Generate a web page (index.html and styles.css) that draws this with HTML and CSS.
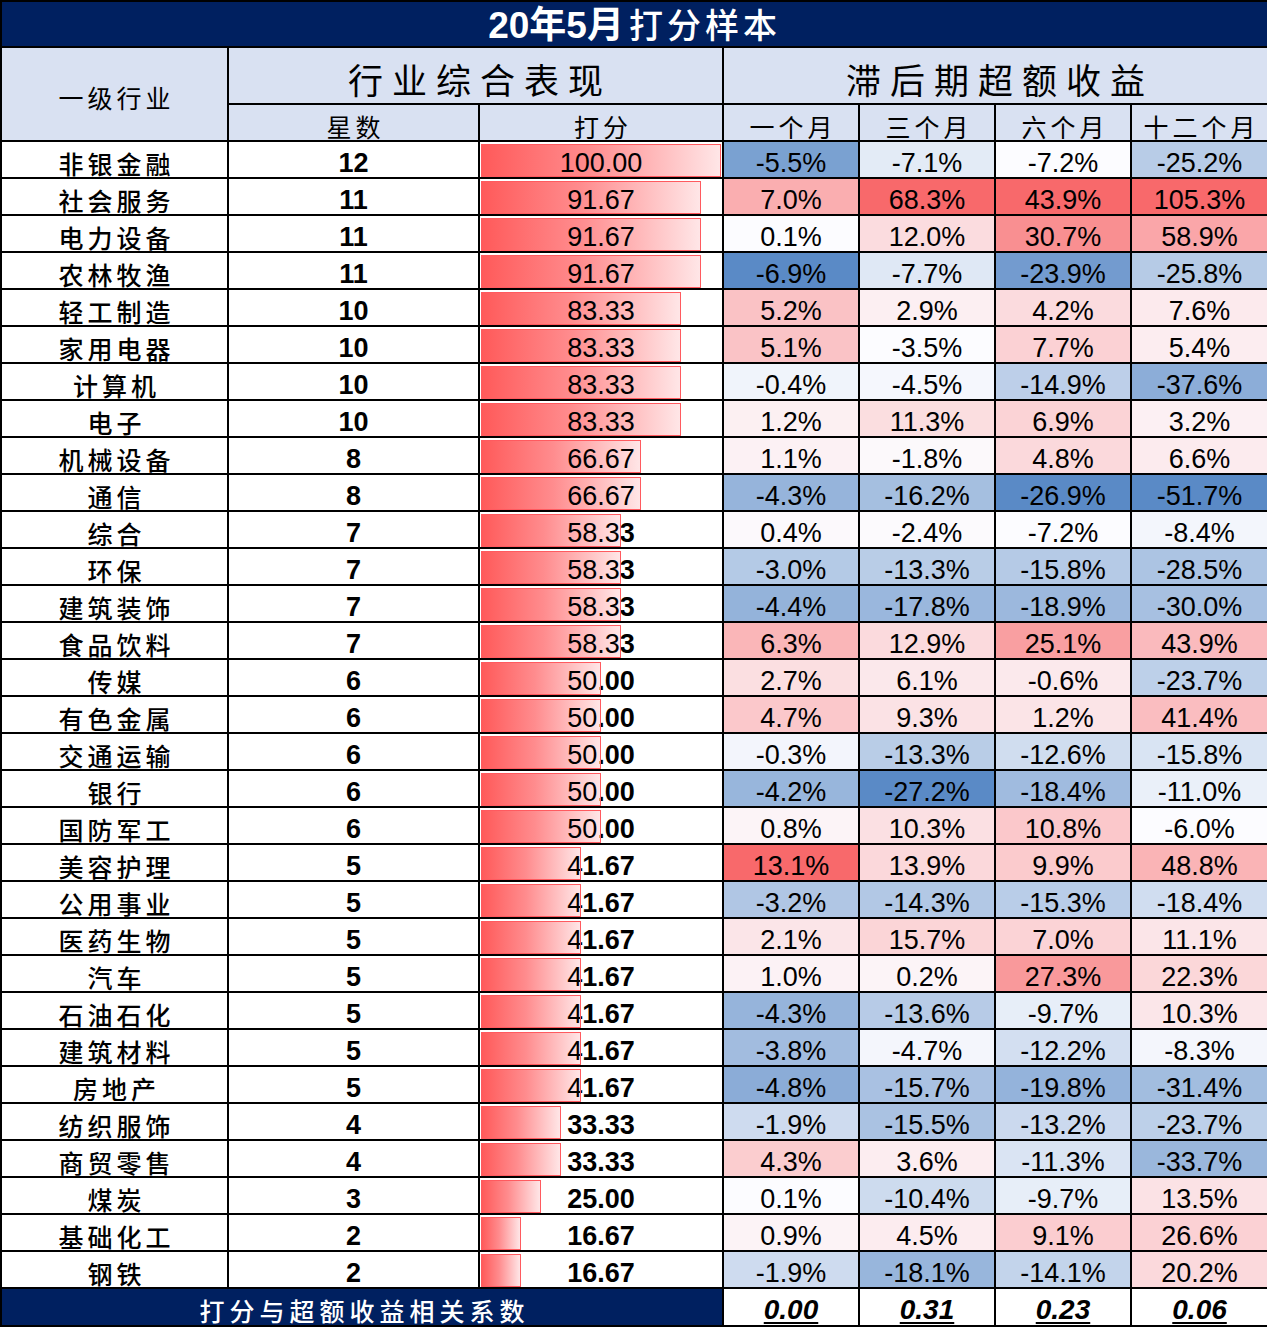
FILE: index.html
```html
<!DOCTYPE html>
<html lang="zh-CN">
<head>
<meta charset="utf-8">
<title>20年5月打分样本</title>
<link rel="stylesheet" href="styles.css">
</head>
<body>
<table class="sheet">
<colgroup><col class="c-ind"><col class="c-star"><col class="c-score"><col class="c-ret"><col class="c-ret"><col class="c-ret"><col class="c-ret-last"></colgroup>
<thead>
<tr class="r-title"><th colspan="7"><span class="t-num">20年5月</span><span class="t-cn">打分样本</span></th></tr>
<tr class="r-h1"><th rowspan="2" class="h-ind">一级行业</th><th colspan="2" class="h-big">行业综合表现</th><th colspan="4" class="h-big">滞后期超额收益</th></tr>
<tr class="r-h2"><th>星数</th><th>打分</th><th>一个月</th><th>三个月</th><th>六个月</th><th>十二个月</th></tr>
</thead>
<tbody>
<tr><td class="ind">非银金融</td><td class="star">12</td><td class="score"><div class="sc"><div class="bar" style="width:240px" data-s="100.00"></div>100.00</div></td><td class="ret">-5.5%</td><td class="ret">-7.1%</td><td class="ret">-7.2%</td><td class="ret">-25.2%</td></tr>
<tr><td class="ind">社会服务</td><td class="star">11</td><td class="score"><div class="sc"><div class="bar" style="width:220px" data-s="91.67"></div>91.67</div></td><td class="ret">7.0%</td><td class="ret">68.3%</td><td class="ret">43.9%</td><td class="ret">105.3%</td></tr>
<tr><td class="ind">电力设备</td><td class="star">11</td><td class="score"><div class="sc"><div class="bar" style="width:220px" data-s="91.67"></div>91.67</div></td><td class="ret">0.1%</td><td class="ret">12.0%</td><td class="ret">30.7%</td><td class="ret">58.9%</td></tr>
<tr><td class="ind">农林牧渔</td><td class="star">11</td><td class="score"><div class="sc"><div class="bar" style="width:220px" data-s="91.67"></div>91.67</div></td><td class="ret">-6.9%</td><td class="ret">-7.7%</td><td class="ret">-23.9%</td><td class="ret">-25.8%</td></tr>
<tr><td class="ind">轻工制造</td><td class="star">10</td><td class="score"><div class="sc"><div class="bar" style="width:200px" data-s="83.33"></div>83.33</div></td><td class="ret">5.2%</td><td class="ret">2.9%</td><td class="ret">4.2%</td><td class="ret">7.6%</td></tr>
<tr><td class="ind">家用电器</td><td class="star">10</td><td class="score"><div class="sc"><div class="bar" style="width:200px" data-s="83.33"></div>83.33</div></td><td class="ret">5.1%</td><td class="ret">-3.5%</td><td class="ret">7.7%</td><td class="ret">5.4%</td></tr>
<tr><td class="ind">计算机</td><td class="star">10</td><td class="score"><div class="sc"><div class="bar" style="width:200px" data-s="83.33"></div>83.33</div></td><td class="ret">-0.4%</td><td class="ret">-4.5%</td><td class="ret">-14.9%</td><td class="ret">-37.6%</td></tr>
<tr><td class="ind">电子</td><td class="star">10</td><td class="score"><div class="sc"><div class="bar" style="width:200px" data-s="83.33"></div>83.33</div></td><td class="ret">1.2%</td><td class="ret">11.3%</td><td class="ret">6.9%</td><td class="ret">3.2%</td></tr>
<tr><td class="ind">机械设备</td><td class="star">8</td><td class="score"><div class="sc"><div class="bar" style="width:160px" data-s="66.67"></div>66.67</div></td><td class="ret">1.1%</td><td class="ret">-1.8%</td><td class="ret">4.8%</td><td class="ret">6.6%</td></tr>
<tr><td class="ind">通信</td><td class="star">8</td><td class="score"><div class="sc"><div class="bar" style="width:160px" data-s="66.67"></div>66.67</div></td><td class="ret">-4.3%</td><td class="ret">-16.2%</td><td class="ret">-26.9%</td><td class="ret">-51.7%</td></tr>
<tr><td class="ind">综合</td><td class="star">7</td><td class="score"><div class="sc"><div class="bar" style="width:140px" data-s="58.33"></div>58.33</div></td><td class="ret">0.4%</td><td class="ret">-2.4%</td><td class="ret">-7.2%</td><td class="ret">-8.4%</td></tr>
<tr><td class="ind">环保</td><td class="star">7</td><td class="score"><div class="sc"><div class="bar" style="width:140px" data-s="58.33"></div>58.33</div></td><td class="ret">-3.0%</td><td class="ret">-13.3%</td><td class="ret">-15.8%</td><td class="ret">-28.5%</td></tr>
<tr><td class="ind">建筑装饰</td><td class="star">7</td><td class="score"><div class="sc"><div class="bar" style="width:140px" data-s="58.33"></div>58.33</div></td><td class="ret">-4.4%</td><td class="ret">-17.8%</td><td class="ret">-18.9%</td><td class="ret">-30.0%</td></tr>
<tr><td class="ind">食品饮料</td><td class="star">7</td><td class="score"><div class="sc"><div class="bar" style="width:140px" data-s="58.33"></div>58.33</div></td><td class="ret">6.3%</td><td class="ret">12.9%</td><td class="ret">25.1%</td><td class="ret">43.9%</td></tr>
<tr><td class="ind">传媒</td><td class="star">6</td><td class="score"><div class="sc"><div class="bar" style="width:120px" data-s="50.00"></div>50.00</div></td><td class="ret">2.7%</td><td class="ret">6.1%</td><td class="ret">-0.6%</td><td class="ret">-23.7%</td></tr>
<tr><td class="ind">有色金属</td><td class="star">6</td><td class="score"><div class="sc"><div class="bar" style="width:120px" data-s="50.00"></div>50.00</div></td><td class="ret">4.7%</td><td class="ret">9.3%</td><td class="ret">1.2%</td><td class="ret">41.4%</td></tr>
<tr><td class="ind">交通运输</td><td class="star">6</td><td class="score"><div class="sc"><div class="bar" style="width:120px" data-s="50.00"></div>50.00</div></td><td class="ret">-0.3%</td><td class="ret">-13.3%</td><td class="ret">-12.6%</td><td class="ret">-15.8%</td></tr>
<tr><td class="ind">银行</td><td class="star">6</td><td class="score"><div class="sc"><div class="bar" style="width:120px" data-s="50.00"></div>50.00</div></td><td class="ret">-4.2%</td><td class="ret">-27.2%</td><td class="ret">-18.4%</td><td class="ret">-11.0%</td></tr>
<tr><td class="ind">国防军工</td><td class="star">6</td><td class="score"><div class="sc"><div class="bar" style="width:120px" data-s="50.00"></div>50.00</div></td><td class="ret">0.8%</td><td class="ret">10.3%</td><td class="ret">10.8%</td><td class="ret">-6.0%</td></tr>
<tr><td class="ind">美容护理</td><td class="star">5</td><td class="score"><div class="sc"><div class="bar" style="width:100px" data-s="41.67"></div>41.67</div></td><td class="ret">13.1%</td><td class="ret">13.9%</td><td class="ret">9.9%</td><td class="ret">48.8%</td></tr>
<tr><td class="ind">公用事业</td><td class="star">5</td><td class="score"><div class="sc"><div class="bar" style="width:100px" data-s="41.67"></div>41.67</div></td><td class="ret">-3.2%</td><td class="ret">-14.3%</td><td class="ret">-15.3%</td><td class="ret">-18.4%</td></tr>
<tr><td class="ind">医药生物</td><td class="star">5</td><td class="score"><div class="sc"><div class="bar" style="width:100px" data-s="41.67"></div>41.67</div></td><td class="ret">2.1%</td><td class="ret">15.7%</td><td class="ret">7.0%</td><td class="ret">11.1%</td></tr>
<tr><td class="ind">汽车</td><td class="star">5</td><td class="score"><div class="sc"><div class="bar" style="width:100px" data-s="41.67"></div>41.67</div></td><td class="ret">1.0%</td><td class="ret">0.2%</td><td class="ret">27.3%</td><td class="ret">22.3%</td></tr>
<tr><td class="ind">石油石化</td><td class="star">5</td><td class="score"><div class="sc"><div class="bar" style="width:100px" data-s="41.67"></div>41.67</div></td><td class="ret">-4.3%</td><td class="ret">-13.6%</td><td class="ret">-9.7%</td><td class="ret">10.3%</td></tr>
<tr><td class="ind">建筑材料</td><td class="star">5</td><td class="score"><div class="sc"><div class="bar" style="width:100px" data-s="41.67"></div>41.67</div></td><td class="ret">-3.8%</td><td class="ret">-4.7%</td><td class="ret">-12.2%</td><td class="ret">-8.3%</td></tr>
<tr><td class="ind">房地产</td><td class="star">5</td><td class="score"><div class="sc"><div class="bar" style="width:100px" data-s="41.67"></div>41.67</div></td><td class="ret">-4.8%</td><td class="ret">-15.7%</td><td class="ret">-19.8%</td><td class="ret">-31.4%</td></tr>
<tr><td class="ind">纺织服饰</td><td class="star">4</td><td class="score"><div class="sc"><div class="bar" style="width:80px" data-s="33.33"></div>33.33</div></td><td class="ret">-1.9%</td><td class="ret">-15.5%</td><td class="ret">-13.2%</td><td class="ret">-23.7%</td></tr>
<tr><td class="ind">商贸零售</td><td class="star">4</td><td class="score"><div class="sc"><div class="bar" style="width:80px" data-s="33.33"></div>33.33</div></td><td class="ret">4.3%</td><td class="ret">3.6%</td><td class="ret">-11.3%</td><td class="ret">-33.7%</td></tr>
<tr><td class="ind">煤炭</td><td class="star">3</td><td class="score"><div class="sc"><div class="bar" style="width:60px" data-s="25.00"></div>25.00</div></td><td class="ret">0.1%</td><td class="ret">-10.4%</td><td class="ret">-9.7%</td><td class="ret">13.5%</td></tr>
<tr><td class="ind">基础化工</td><td class="star">2</td><td class="score"><div class="sc"><div class="bar" style="width:40px" data-s="16.67"></div>16.67</div></td><td class="ret">0.9%</td><td class="ret">4.5%</td><td class="ret">9.1%</td><td class="ret">26.6%</td></tr>
<tr><td class="ind">钢铁</td><td class="star">2</td><td class="score"><div class="sc"><div class="bar" style="width:40px" data-s="16.67"></div>16.67</div></td><td class="ret">-1.9%</td><td class="ret">-18.1%</td><td class="ret">-14.1%</td><td class="ret">20.2%</td></tr>
</tbody>
<tfoot>
<tr class="r-foot"><td colspan="3" class="f-label">打分与超额收益相关系数</td><td class="f-val">0.00</td><td class="f-val">0.31</td><td class="f-val">0.23</td><td class="f-val">0.06</td></tr>
</tfoot>
</table>
<script src="script.js"></script>
</body>
</html>
```

FILE: styles.css
```css
html, body {
  margin: 0;
  padding: 0;
  background: #ffffff;
}

body {
  font-family: "Liberation Sans", "Noto Sans CJK SC", sans-serif;
  color: #000;
}

.sheet {
  border-collapse: collapse;
  table-layout: fixed;
  width: 1267px;
}

.c-ind { width: 227px; }
.c-star { width: 251px; }
.c-score { width: 244px; }
.c-ret { width: 136px; }
.c-ret-last { width: 137px; }

.sheet th,
.sheet td {
  border: 2px solid #000;
  padding: 6px 0 0;
  text-align: center;
  vertical-align: middle;
  white-space: nowrap;
  line-height: 28px;
}

/* title */
.r-title { height: 45px; }
.r-title th {
  background: #002060;
  color: #fff;
  padding: 2px 0 0;
  line-height: 40px;
  font-size: 37px;
}
.t-num {
  font-family: "Liberation Sans", "Noto Sans CJK SC", sans-serif;
  font-weight: 700;
}
.t-cn {
  font-family: "Noto Sans CJK SC", sans-serif;
  font-weight: 500;
  font-size: 34px;
  letter-spacing: 4px;
  margin-left: 5px;
}

/* header rows */
.r-h1 { height: 57px; }
.r-h2 { height: 37px; }
.r-h1 th,
.r-h2 th {
  background: #d9e1f2;
  font-family: "Noto Sans CJK SC", sans-serif;
  font-weight: 400;
}
.h-ind {
  font-size: 25px;
  letter-spacing: 4px;
  text-indent: 4px;
  padding-top: 0;
  padding-bottom: 4px;
}
.h-big {
  font-size: 35px;
  letter-spacing: 9px;
  text-indent: 9px;
  padding-top: 6px;
  line-height: 40px;
}
.r-h2 th {
  font-size: 25px;
  letter-spacing: 4px;
  text-indent: 4px;
}

/* data rows */
tbody tr { height: 37px; }

.ind {
  font-family: "Noto Sans CJK SC", sans-serif;
  font-weight: 500;
  font-size: 25px;
  letter-spacing: 4px;
  text-indent: 4px;
}

.star {
  font-size: 27px;
  font-weight: 700;
}

.score {
  font-size: 27px;
  font-weight: 700;
}

.sc {
  position: relative;
  width: 242px;
  height: 28px;
}

.bar {
  position: absolute;
  left: 1px;
  top: -5px;
  height: 33px;
  box-sizing: border-box;
  border: 1px solid #ff5a5f;
  background: linear-gradient(to right, #ff5a5a 0%, #ff8c8e 45%, #ffe6e7 100%);
  overflow: hidden;
}

.bar::after {
  content: attr(data-s);
  position: absolute;
  left: -2px;
  top: 4px;
  width: 242px;
  height: 28px;
  line-height: 28px;
  text-align: center;
  font-weight: 400;
  color: #000;
}

.ret {
  font-size: 27px;
  font-weight: 400;
}

/* footer */
.r-foot { height: 38px; }
.f-label {
  background: #002060;
  color: #fff;
  font-family: "Noto Sans CJK SC", sans-serif;
  font-weight: 500;
  font-size: 25px;
  letter-spacing: 5px;
  text-indent: 5px;
}
.f-val {
  font-size: 28px;
  font-weight: 700;
  font-style: italic;
  text-decoration: underline;
  text-decoration-thickness: 2px;
  text-underline-offset: 3px;
}
```

FILE: script.js
```js
(function () {
  var MIN = [90, 138, 198];
  var MID = [252, 252, 255];
  var MAX = [248, 105, 107];
  function mix(a, b, t) {
    return [0, 1, 2].map(function (i) { return Math.round(a[i] + (b[i] - a[i]) * t); });
  }
  var rows = Array.prototype.slice.call(document.querySelectorAll('.sheet tbody tr'));
  [3, 4, 5, 6].forEach(function (ci) {
    var cells = rows.map(function (r) { return r.children[ci]; });
    var vals = cells.map(function (c) { return parseFloat(c.textContent); });
    var s = vals.slice().sort(function (a, b) { return a - b; });
    var min = s[0], max = s[s.length - 1];
    var p = (s.length - 1) * 0.5;
    var lo = Math.floor(p), hi = Math.ceil(p);
    var mid = s[lo] + (p - lo) * (s[hi] - s[lo]);
    cells.forEach(function (c, i) {
      var v = vals[i], col;
      if (v <= mid) {
        col = mix(MIN, MID, mid === min ? 1 : (v - min) / (mid - min));
      } else {
        col = mix(MID, MAX, max === mid ? 1 : (v - mid) / (max - mid));
      }
      c.style.backgroundColor = 'rgb(' + col.join(',') + ')';
    });
  });
})();
```
